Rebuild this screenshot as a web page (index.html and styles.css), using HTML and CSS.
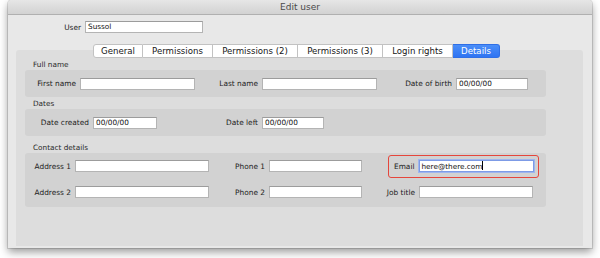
FILE: index.html
```html
<!DOCTYPE html>
<html>
<head>
<meta charset="utf-8">
<link rel="stylesheet" href="styles.css">
</head>
<body>
<div class="window">
  <div class="titlebar">Edit user</div>
  <div class="user-row">
    <span class="lbl user-lbl">User</span>
    <span class="inp user-inp">Sussol</span>
  </div>
  <div class="tabs">
    <span class="tab t-general">General</span>
    <span class="tab t-perm">Permissions</span>
    <span class="tab t-perm2">Permissions (2)</span>
    <span class="tab t-perm3">Permissions (3)</span>
    <span class="tab t-login">Login rights</span>
    <span class="tab t-details active">Details</span>
  </div>
  <div class="pane">
    <div class="sec-label">Full name</div>
    <div class="group g-short">
      <div class="row">
        <span class="lbl w51">First name</span><span class="inp w115"></span>
        <span class="lbl w63">Last name</span><span class="inp w115"></span>
        <span class="lbl w75">Date of birth</span><span class="inp w72">00/00/00</span>
      </div>
    </div>
    <div class="sec-label sec-dates">Dates</div>
    <div class="group g-short">
      <div class="row">
        <span class="lbl w64">Date created</span><span class="inp w64">00/00/00</span>
        <span class="lbl w101">Date left</span><span class="inp w62">00/00/00</span>
      </div>
    </div>
    <div class="sec-label sec-contact">Contact details</div>
    <div class="group g-contact">
      <div class="row row-c">
        <span class="lbl w46">Address 1</span><span class="inp w134"></span>
        <span class="lbl w56">Phone 1</span><span class="inp w93"></span>
        <div class="highlight">
          <span class="lbl">Email</span><span class="inp w115 focus">here@there.com<span class="caret"></span></span>
        </div>
      </div>
      <div class="row row-c">
        <span class="lbl w46">Address 2</span><span class="inp w134"></span>
        <span class="lbl w56">Phone 2</span><span class="inp w93"></span>
        <span class="lbl w53">Job title</span><span class="inp w114"></span>
      </div>
    </div>
  </div>
</div>
</body>
</html>
```

FILE: styles.css
```css
* { box-sizing: border-box; }
html, body { margin: 0; padding: 0; background: #ffffff; }
body {
  font-family: "DejaVu Sans", sans-serif;
  width: 600px;
  height: 258px;
  overflow: hidden;
}
.window {
  margin-left: 8px;
  width: 584px;
  height: 248px;
  background: #e8e8e8;
  border-radius: 4px 4px 0 0;
  box-shadow: 0 0 0 1px rgba(0,0,0,0.12), 0 4px 9px rgba(0,0,0,0.4);
  display: flex;
  flex-direction: column;
}
.titlebar {
  height: 15px;
  background: linear-gradient(#e6e6e6, #d2d2d2);
  border-bottom: 1px solid #b0b0b0;
  border-radius: 4px 4px 0 0;
  font-size: 9px;
  line-height: 14px;
  color: #4a4a4a;
  text-align: center;
}
.lbl {
  font-size: 7.4px;
  color: #1c1c1c;
  text-align: right;
  white-space: nowrap;
  padding-right: 4px;
  flex: none;
}
.inp {
  display: block;
  flex: none;
  height: 12px;
  background: #ffffff;
  border: 1px solid #b4b4b4;
  border-top-color: #9c9c9c;
  font-size: 7.3px;
  line-height: 10px;
  padding-left: 2px;
  color: #111;
  white-space: nowrap;
}
.user-row {
  display: flex;
  align-items: center;
  margin-top: 6px;
  height: 12px;
}
.user-lbl { width: 77px; }
.user-inp { width: 118px; }

.tabs {
  display: flex;
  margin-top: 11px;
  margin-left: 85px;
  height: 14px;
  margin-bottom: -8px;
  position: relative;
  z-index: 1;
}
.tab {
  display: block;
  height: 14px;
  background: #ffffff;
  border: 1px solid #c2c2c2;
  border-left: none;
  font-size: 8.6px;
  line-height: 12px;
  text-align: center;
  color: #161616;
}
.t-general { width: 50px; border-left: 1px solid #c2c2c2; border-radius: 3px 0 0 3px; }
.t-perm { width: 70px; }
.t-perm2 { width: 85px; }
.t-perm3 { width: 85px; }
.t-login { width: 70px; }
.t-details { width: 47px; }
.tab.active {
  background: linear-gradient(#4a8ef8, #2f74f2);
  border-color: #2f6fe6;
  color: #ffffff;
  border-radius: 0 3px 3px 0;
}

.pane {
  margin: 0 9px 2px 8px;
  flex: 1;
  background: #dddddd;
  border-radius: 3px 3px 0 0;
  padding: 10px 0 0 9px;
}
.sec-label {
  font-size: 7.3px;
  line-height: 10px;
  height: 10px;
  color: #2a2a2a;
  padding-left: 8px;
}
.sec-dates { margin-top: 2px; }
.sec-contact { margin-top: 7px; }
.group {
  width: 521px;
  background: #d2d2d2;
  border-radius: 3px;
}
.g-short { height: 27px; display: flex; align-items: center; }
.g-contact { height: 54px; }
.row { display: flex; align-items: center; }
.row-c { height: 26px; }

.w46 { width: 50px; }
.w51 { width: 55px; }
.w53 { width: 57px; }
.w56 { width: 60px; }
.w63 { width: 67px; }
.w64 { width: 68px; }
.w75 { width: 79px; }
.w101 { width: 105px; }
.inp.w62 { width: 62px; }
.inp.w64 { width: 64px; }
.inp.w72 { width: 72px; }
.inp.w93 { width: 93px; }
.inp.w114 { width: 114px; }
.inp.w115 { width: 115px; }
.inp.w134 { width: 134px; }

.highlight {
  margin-left: 26px;
  width: 151px;
  height: 23px;
  border: 1.5px solid #e5463c;
  border-radius: 3px;
  display: flex;
  align-items: center;
  justify-content: flex-end;
  padding-right: 4.5px;
}
.inp.focus {
  border: 1px solid #7d9be6;
  box-shadow: 0 0 0 1px #9fb6ee;
  position: relative;
}
.caret {
  display: inline-block;
  width: 1px;
  height: 9px;
  background: #000;
  vertical-align: -1px;
}
```
